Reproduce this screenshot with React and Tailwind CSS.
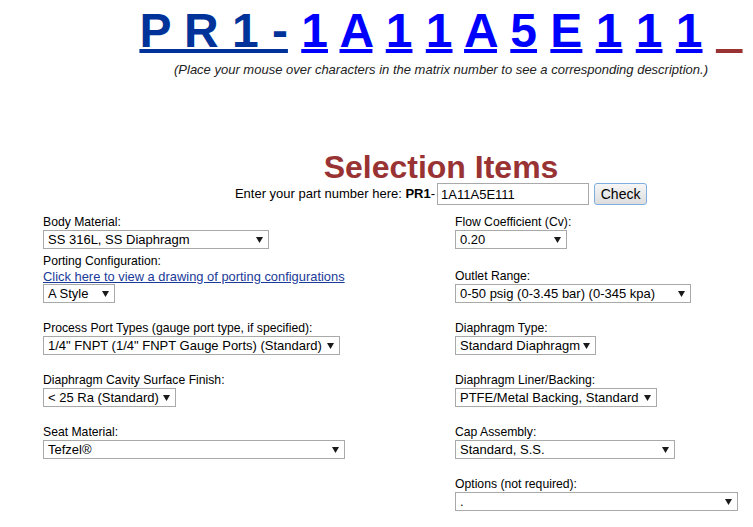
import React from 'react';

const chars = ['1', 'A', '1', '1', 'A', '5', 'E', '1', '1', '1'];

const Arrow = () => (
  <svg width="7" height="7" viewBox="0 0 7 7" className="shrink-0">
    <path d="M0 1 H7 L3.5 7 Z" fill="#1a1a1a" />
  </svg>
);

const FakeSelect = ({ width, value }) => (
  <div
    className="flex items-center justify-between gap-[3px] h-[19px] border border-[#a9a9a9] bg-white pl-[4px] pr-[5px] text-[13px] leading-[17px] text-black whitespace-nowrap"
    style={{ width }}
  >
    <span>{value}</span>
    <Arrow />
  </div>
);

const Field = ({ label, width, value, children }) => (
  <div className="flex flex-col justify-end">
    <div className="text-[12.2px] leading-[15px] text-black whitespace-nowrap">{label}</div>
    {children}
    <FakeSelect width={width} value={value} />
  </div>
);

const Row = ({ h, children }) => (
  <div className={`grid grid-cols-[412px_1fr] items-end ${h}`}>{children}</div>
);

const App = () => {
  return (
    <div className="w-[753px] h-[527px] overflow-hidden bg-white font-['Liberation_Sans',Arial,sans-serif]">
      <div className="w-[882px] text-center">
        <div className="pt-[3px] leading-[56px] text-[48px] font-bold whitespace-nowrap">
          <a className="text-[#003399] underline decoration-4 underline-offset-2">P R 1 -</a>{' '}
          {chars.map((c, i) => (
            <React.Fragment key={i}>
              <a className="text-[#0000ff] underline decoration-4 underline-offset-2">{c}</a>{' '}
            </React.Fragment>
          ))}
          <span className="text-transparent underline decoration-4 underline-offset-2 decoration-[#993333]">_</span>
        </div>
        <div className="mt-[3px] text-[13px] leading-[15px] italic text-[#222]">
          (Place your mouse over characters in the matrix number to see a corresponding description.)
        </div>
        <div className="mt-[74px] text-[32px] leading-[32px] font-bold text-[#993333]">Selection Items</div>
        <div className="flex justify-center items-center h-[22px] text-[13px] text-black">
          <span className="whitespace-nowrap">
            Enter your part number here: <b>PR1</b>-
          </span>
          <input
            readOnly
            value="1A11A5E111"
            className="ml-[2px] w-[152px] h-[22px] border border-[#a9a9a9] px-[3px] text-[13px] text-black outline-none"
          />
          <button className="ml-[5px] w-[53px] h-[22px] rounded-[3px] border border-[#7eaee0] bg-gradient-to-b from-[#f6f6f6] to-[#dddddd] text-[14px] text-black">
            Check
          </button>
        </div>
      </div>

      <div className="pl-[43px] mt-[8px]">
        <Row h="h-[36px]">
          <Field label="Body Material:" width={226} value="SS 316L, SS Diaphragm" />
          <Field label="Flow Coefficient (Cv):" width={112} value="0.20" />
        </Row>
        <Row h="h-[54px]">
          <Field label="Porting Configuration:" width={72} value="A Style">
            <a className="text-[12.9px] leading-[15px] text-[#1a3a99] underline whitespace-nowrap">
              Click here to view a drawing of porting configurations
            </a>
          </Field>
          <Field label="Outlet Range:" width={236} value="0-50 psig (0-3.45 bar) (0-345 kpa)" />
        </Row>
        <Row h="h-[52px]">
          <Field
            label="Process Port Types (gauge port type, if specified):"
            width={297}
            value={'1/4" FNPT (1/4" FNPT Gauge Ports) (Standard)'}
          />
          <Field label="Diaphragm Type:" width={141} value="Standard Diaphragm" />
        </Row>
        <Row h="h-[52px]">
          <Field label="Diaphragm Cavity Surface Finish:" width={133} value="< 25 Ra (Standard)" />
          <Field label="Diaphragm Liner/Backing:" width={202} value="PTFE/Metal Backing, Standard" />
        </Row>
        <Row h="h-[52px]">
          <Field label="Seat Material:" width={302} value="Tefzel®" />
          <Field label="Cap Assembly:" width={220} value="Standard, S.S." />
        </Row>
        <Row h="h-[52px]">
          <div />
          <Field label="Options (not required):" width={283} value="." />
        </Row>
      </div>
    </div>
  );
};

export default App;
